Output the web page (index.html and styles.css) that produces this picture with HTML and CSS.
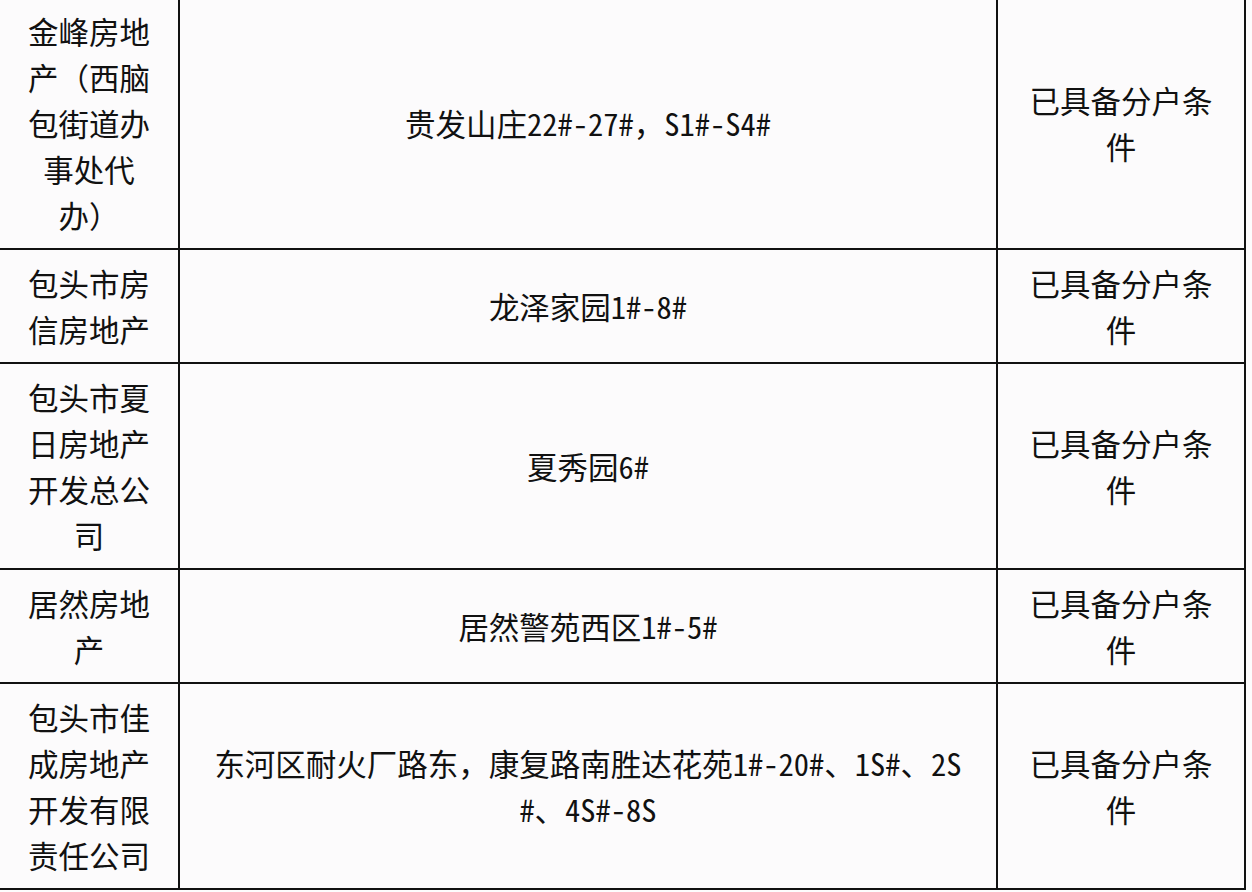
FILE: index.html
```html
<!DOCTYPE html>
<html lang="zh-CN">
<head>
<meta charset="utf-8">
<title>分户条件</title>
<link rel="stylesheet" href="styles.css">
</head>
<body>
<div class="table">
  <div class="cell c1">金峰房地产（西脑包街道办事处代办）</div>
  <div class="cell c2">贵发山庄22#-27#，S1#-S4#</div>
  <div class="cell c3">已具备分户条件</div>

  <div class="cell c1">包头市房信房地产</div>
  <div class="cell c2">龙泽家园1#-8#</div>
  <div class="cell c3">已具备分户条件</div>

  <div class="cell c1">包头市夏日房地产开发总公司</div>
  <div class="cell c2">夏秀园6#</div>
  <div class="cell c3">已具备分户条件</div>

  <div class="cell c1">居然房地产</div>
  <div class="cell c2">居然警苑西区1#-5#</div>
  <div class="cell c3">已具备分户条件</div>

  <div class="cell c1">包头市佳成房地产开发有限责任公司</div>
  <div class="cell c2">东河区耐火厂路东，康复路南胜达花苑1#-20#、1S#、2S#、4S#-8S</div>
  <div class="cell c3">已具备分户条件</div>
</div>
</body>
</html>
```

FILE: styles.css
```css
html, body {
  margin: 0;
  padding: 0;
  background: #fdfcfd;
}

body {
  width: 1252px;
  height: 892px;
  overflow: hidden;
}

.table {
  display: grid;
  grid-template-columns: 178px 816px 246px;
  gap: 2px;
  padding: 2px;
  width: max-content;
  background: #111;
  margin: -4px 0 0 -2px;
}

.cell {
  background: #fcfbfc;
  display: flex;
  align-items: center;
  justify-content: center;
  text-align: center;
  padding: 10px 25px;
  font-family: "Noto Sans Mono CJK SC", "Noto Sans CJK SC", sans-serif;
  font-size: 30.5px;
  line-height: 46px;
  color: #111;
  word-break: break-all;
}

.c2 {
  padding: 10px 30px;
}
```
